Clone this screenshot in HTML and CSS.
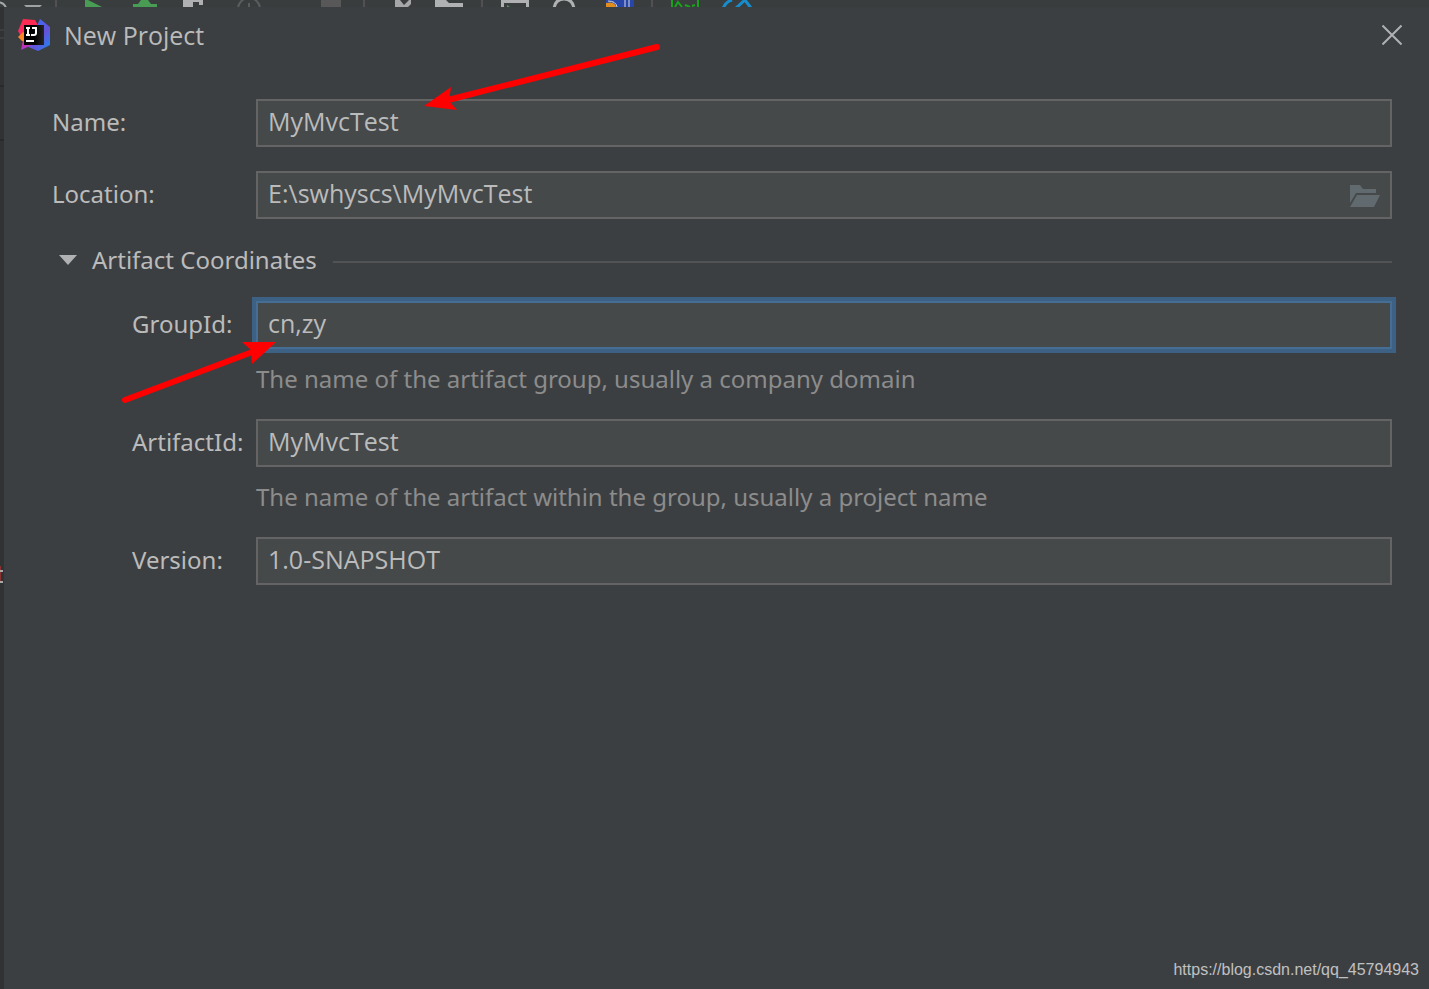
FILE: index.html
```
<!DOCTYPE html>
<html lang="en">
<head>
<meta charset="utf-8">
<title>New Project</title>
<link rel="stylesheet" href="styles.css">
</head>
<body>
<div class="ide">
  <svg class="ide-toolbar" width="760" height="7" viewBox="0 0 760 7" aria-hidden="true">
    <path d="M-3 18a7 8 0 1 1 9-10" fill="none" stroke="#a5a7a9" stroke-width="2"/>
    <path d="M24 5h18l-2 2H26z" fill="#a0a2a4"/>
    <path d="M55 0h2v7h-2zM363 0h2v7h-2zM481 0h2v7h-2zM651 0h2v7h-2z" fill="#515151"/>
    <path d="M85 0h3l14 7H85z" fill="#499c54"/>
    <path d="M133 7V4h5l3-4h7l3 4h6v3z" fill="#499c54"/>
    <path d="M183 0h20v5h-4V2h-6v5h-10z" fill="#afb1b3"/>
    <path d="M238 9a11 11 0 0 1 22 0M249 3v5" fill="none" stroke="#5a5c5d" stroke-width="2"/>
    <path d="M321 0h20v7h-20z" fill="#595858"/>
    <path d="M395 0h5l4 5 5-5h2v4l-3 3h-13z" fill="#a5a7a9"/>
    <path d="M435 0h11l3 3h14v4h-28z" fill="#afb1b3"/>
    <path d="M501 0h28v7h-3V3h-22v4h-3z" fill="#afb1b3"/>
    <path d="M507 5l3 2h-3z" fill="#499c54"/>
    <path d="M554 9q1-10 10-10t10 10" fill="none" stroke="#afb1b3" stroke-width="3"/>
    <path d="M606 0h28v7h-28z" fill="#2746a8"/>
    <path d="M606 3q9-2 10 4h-10z" fill="#e08d1d"/>
    <path d="M608 1q8 0 9 6M625 0v7M629 0v7" fill="none" stroke="#d5d8e0"/>
    <path d="M672 0v7M698 0v7M675 7l3-5 4 5M685 5l5 2M692 6l3-1" fill="none" stroke="#18a31b" stroke-width="2"/>
    <path d="M723 9q2-7 9-9M736 8l9-8 6 8" fill="none" stroke="#168dcc" stroke-width="3"/>
  </svg>
  <svg class="ide-gutter" width="4" height="600" viewBox="0 0 4 600" aria-hidden="true">
    <path d="M0 86h4M0 140h4" stroke="#292a2b" stroke-width="2"/>
    <path d="M0 30h4M0 38h4" stroke="#4a4c4d"/>
    <path d="M0 566h1v16h-1z" fill="#8b3333"/>
    <path d="M0 570h3v2h-3zM0 581h3v2h-3z" fill="#a9a9a9"/>
  </svg>
  <main class="dialog">
    <header class="titlebar">
      <svg class="logo" width="32" height="32" viewBox="0 0 32 32" aria-hidden="true">
        <defs>
          <linearGradient id="red" x1="0" y1="0" x2="0" y2="1"><stop offset="0" stop-color="#ff2b50"/><stop offset=".55" stop-color="#f52b68"/><stop offset="1" stop-color="#a638d0"/></linearGradient>
          <linearGradient id="blue" x1="0" y1="0" x2="1" y2="1"><stop offset="0" stop-color="#3971ee"/><stop offset=".4" stop-color="#4e62ee"/><stop offset=".6" stop-color="#6652d8"/><stop offset="1" stop-color="#168af4"/></linearGradient>
          <linearGradient id="tile" x1="0" y1="0" x2="1" y2="0"><stop offset=".5" stop-color="#000"/><stop offset="1" stop-color="#252525"/></linearGradient>
        </defs>
        <path d="M22 0l10 8v18l-12 6-12-5 10-18z" fill="url(#blue)"/>
        <path d="M5 0l12 1 4 7-7 18L3 31 5 21 0 12z" fill="url(#red)"/>
        <path d="M5 13l3 2v8l-4-1-4-4z" fill="#fb8622"/>
        <path d="M6 6h20v20H6z" fill="url(#tile)"/>
        <path d="M8 9h4M10 9v7M8 16h4M14 9h4v5q0 2-2 2h-3M8 22h8" fill="none" stroke="#fff" stroke-width="2"/>
      </svg>
      <h1 class="title">New Project</h1>
      <button class="close" type="button" aria-label="Close">
        <svg width="20" height="20" viewBox="0 0 20 20"><path d="M.500.500l19 19M19.500.500l-19 19" stroke="#afb1b3" stroke-width="2"/></svg>
      </button>
    </header>
    <form class="form">
      <div class="row">
        <label class="label" for="name">Name:</label>
        <input class="field" id="name" type="text" value="MyMvcTest">
      </div>
      <div class="row">
        <label class="label" for="location">Location:</label>
        <div class="field-wrap">
          <input class="field field-browse" id="location" type="text" value="E:\swhyscs\MyMvcTest">
          <button class="browse" type="button" aria-label="Browse">
            <svg width="30" height="22" viewBox="0 0 30 22"><path d="M0 0h10l3 4h13v4H6L0 18zM7 10h23l-6 12H0z" fill="#616a6e"/></svg>
          </button>
        </div>
      </div>
      <section class="section">
        <h2 class="section-title">
          <button class="toggle" type="button" aria-expanded="true">
            <svg width="18" height="10" viewBox="0 0 18 10" aria-hidden="true"><path d="M0 0h18l-9 10z" fill="#afb1b3"/></svg>
            Artifact Coordinates
          </button>
        </h2>
        <div class="row row-nested">
          <label class="label" for="group">GroupId:</label>
          <input class="field field-active" id="group" type="text" value="cn,zy" aria-describedby="group-hint">
          <p class="hint" id="group-hint">The name of the artifact group, usually a company domain</p>
        </div>
        <div class="row row-nested">
          <label class="label" for="artifact">ArtifactId:</label>
          <input class="field" id="artifact" type="text" value="MyMvcTest" aria-describedby="artifact-hint">
          <p class="hint" id="artifact-hint">The name of the artifact within the group, usually a project name</p>
        </div>
        <div class="row row-nested">
          <label class="label" for="version">Version:</label>
          <input class="field" id="version" type="text" value="1.0-SNAPSHOT">
        </div>
      </section>
    </form>
    <footer class="footer">https://blog.csdn.net/qq_45794943</footer>
    <svg class="arrow arrow-name" width="236" height="68" viewBox="0 0 236 68" aria-hidden="true">
      <path d="M233 4L24 57" stroke="#f00" stroke-width="6" stroke-linecap="round"/><path d="M0 63L27 44l-2 14 8 9z" fill="#f00"/>
    </svg>
    <svg class="arrow arrow-group" width="156" height="64" viewBox="0 0 156 64" aria-hidden="true">
      <path d="M4 59L134 10" stroke="#f00" stroke-width="6" stroke-linecap="round"/><path d="M155 1L121 1l9 8 1 14z" fill="#f00"/>
    </svg>
  </main>
</div>
</body>
</html>
```

FILE: styles.css
```
* {
  box-sizing: border-box;
}

body {
  margin: 0;
  background: #313335;
  color: #bbbbbb;
  font-family: "Noto Sans", "Open Sans", sans-serif;
  font-size: 24px;
  line-height: 36px;
}

.ide {
  position: relative;
  display: flex;
  min-height: 100vh;
  padding: 7px 0 0 4px;
  background: linear-gradient(#3a3d3e 7px, #303233 7px);
}

.ide-toolbar,
.ide-gutter {
  position: absolute;
  top: 0;
  left: 0;
}

.dialog {
  position: relative;
  display: flex;
  flex: 1;
  flex-direction: column;
  min-width: 0;
  background: #3c3f41;
}

.titlebar {
  display: flex;
  align-items: center;
  height: 56px;
  padding: 0 27px 0 14px;
}

.title {
  flex: 1;
  margin: 0 0 0 14px;
  font-family: "Open Sans", "Noto Sans", sans-serif;
  font-size: 25px;
  font-weight: 400;
}

button {
  display: flex;
  align-items: center;
  padding: 0;
  border: 0;
  background: none;
  color: inherit;
  font: inherit;
}

.form {
  display: flex;
  flex-direction: column;
  gap: 24px;
  padding: 36px 37px 24px 48px;
}

.row {
  display: grid;
  grid-template-columns: 204px minmax(0, 1fr);
  align-items: center;
}

.row-nested {
  grid-template-columns: 124px minmax(0, 1fr);
  margin-left: 80px;
}

.label {
  padding-bottom: 2px;
}

.field {
  width: 100%;
  height: 48px;
  padding: 0 10px 4px;
  border: 2px solid #646464;
  border-radius: 0;
  outline: 0;
  background: #45494a;
  color: #bbbbbb;
  font-family: "Open Sans", "Noto Sans", sans-serif;
  font-size: 25px;
}

.field-browse {
  padding-right: 56px;
}

.field-active {
  border-color: #466d94;
  box-shadow: 0 0 0 4px #3d6185;
}

.field-wrap {
  position: relative;
  display: flex;
}

.browse {
  position: absolute;
  top: 14px;
  right: 12px;
}

.section {
  display: flex;
  flex-direction: column;
  gap: 22px;
}

.section-title {
  display: flex;
  align-items: center;
  gap: 16px;
  margin: 0 0 2px;
  font-weight: 400;
  font-size: 24px;
  line-height: 34px;
}

.section-title::after {
  flex: 1;
  height: 2px;
  margin-top: 4px;
  background: #515354;
  content: "";
}

.toggle {
  gap: 15px;
  padding-left: 7px;
}

.hint {
  grid-column: 2;
  margin: 12px 0 0;
  color: #8c8c8c;
}

.footer {
  margin-top: auto;
  padding: 0 10px 9px;
  color: #c0c1c2;
  font-family: "Liberation Sans", Arial, sans-serif;
  font-size: 16px;
  line-height: 20px;
  text-align: right;
}

.arrow {
  position: absolute;
  pointer-events: none;
  fill: none;
}

.arrow-name {
  top: 36px;
  left: 420px;
}

.arrow-group {
  top: 334px;
  left: 117px;
}
```
